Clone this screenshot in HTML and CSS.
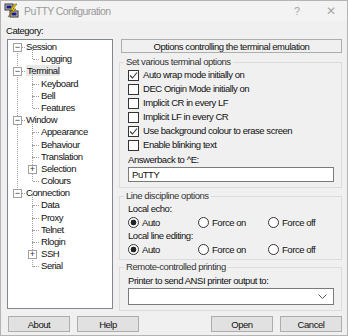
FILE: index.html
```html
<!DOCTYPE html>
<html lang="en">
<head>
  <meta charset="UTF-8">
  <title>PuTTY Configuration</title>
  <link rel="stylesheet" href="styles.css">
</head>
<body>
  <div class="window">
    <div class="titlebar">
      <svg class="app-icon" width="16" height="16" viewBox="0 0 16 16">
        <rect x="1" y="1" width="8" height="6" fill="#c8c8c8" stroke="#333" stroke-width="1"/>
        <rect x="2.5" y="2.5" width="5" height="3" fill="#1a1a80"/>
        <rect x="6" y="8" width="8" height="6" fill="#c8c8c8" stroke="#333" stroke-width="1"/>
        <rect x="7.5" y="9.5" width="5" height="3" fill="#1a1a80"/>
        <path d="M11 1 L6 7 L9 7 L4 14 L12 6 L9 6 L13 1 Z" fill="#f4d000" stroke="#6a5a00" stroke-width="0.6"/>
      </svg>
      <span class="title">PuTTY Configuration</span>
      <span class="tb-btn help-btn">?</span>
      <span class="tb-btn close-btn">✕</span>
    </div>

    <div class="content">
      <div class="cat-label">Category:</div>
      <div class="columns">
        <ul class="tree">
          <li class="top"><span class="exp">−</span>Session</li>
          <li class="child last">Logging</li>
          <li class="top"><span class="exp">−</span><span class="sel">Terminal</span></li>
          <li class="child">Keyboard</li>
          <li class="child">Bell</li>
          <li class="child last">Features</li>
          <li class="top"><span class="exp">−</span>Window</li>
          <li class="child">Appearance</li>
          <li class="child">Behaviour</li>
          <li class="child">Translation</li>
          <li class="child plus"><span class="exp">+</span>Selection</li>
          <li class="child last">Colours</li>
          <li class="top"><span class="exp">−</span>Connection</li>
          <li class="child">Data</li>
          <li class="child">Proxy</li>
          <li class="child">Telnet</li>
          <li class="child">Rlogin</li>
          <li class="child plus"><span class="exp">+</span>SSH</li>
          <li class="child last">Serial</li>
        </ul>

        <div class="panel">
          <div class="panel-head">Options controlling the terminal emulation</div>

          <fieldset class="group g1">
            <legend>Set various terminal options</legend>
            <div class="check on">Auto wrap mode initially on</div>
            <div class="check">DEC Origin Mode initially on</div>
            <div class="check">Implicit CR in every LF</div>
            <div class="check">Implicit LF in every CR</div>
            <div class="check on">Use background colour to erase screen</div>
            <div class="check">Enable blinking text</div>
            <div class="field-label">Answerback to ^E:</div>
            <div class="textbox">PuTTY</div>
          </fieldset>

          <fieldset class="group g2">
            <legend>Line discipline options</legend>
            <div class="field-label">Local echo:</div>
            <div class="radios">
              <span class="radio on">Auto</span>
              <span class="radio">Force on</span>
              <span class="radio">Force off</span>
            </div>
            <div class="field-label">Local line editing:</div>
            <div class="radios">
              <span class="radio on">Auto</span>
              <span class="radio">Force on</span>
              <span class="radio">Force off</span>
            </div>
          </fieldset>

          <fieldset class="group g3">
            <legend>Remote-controlled printing</legend>
            <div class="field-label">Printer to send ANSI printer output to:</div>
            <div class="combo">
              <svg width="9" height="6" viewBox="0 0 9 6"><path d="M0.5 0.5 L4.5 4.5 L8.5 0.5" fill="none" stroke="#555" stroke-width="1"/></svg>
            </div>
          </fieldset>
        </div>
      </div>

      <div class="buttons">
        <button class="btn">About</button>
        <button class="btn">Help</button>
        <span class="spacer"></span>
        <button class="btn">Open</button>
        <button class="btn">Cancel</button>
      </div>
    </div>
  </div>
</body>
</html>
```

FILE: styles.css
```css
body {
  margin: 0;
  padding: 0;
  font-family: "Liberation Sans", Arial, sans-serif;
  font-size: 9.5px;
  letter-spacing: -0.45px;
  color: #111;
  background-color: #f0f0f0;
}
.window {
  width: 348px;
  height: 336px;
  box-sizing: border-box;
  background-color: #f0f0f0;
  border: 1px solid #b4b4b4;
  overflow: hidden;
}
.titlebar {
  height: 20px;
  display: flex;
  align-items: center;
  background-color: #f3f3f3;
}
.app-icon {
  margin-left: 3px;
  margin-right: 4px;
}
.title {
  flex: 1;
  font-size: 10.5px;
  letter-spacing: -0.6px;
  color: #9a9a9a;
}
.tb-btn {
  color: #a8a8a8;
  font-size: 11px;
  letter-spacing: 0;
  text-align: center;
}
.help-btn {
  width: 20px;
  margin-right: 14px;
}
.close-btn {
  width: 20px;
  margin-right: 6px;
  font-size: 12px;
}
.content {
  padding: 3px 5px 0 5px;
}
.cat-label {
  height: 14px;
  line-height: 14px;
}
.columns {
  display: flex;
  margin-top: 1px;
}

/* category tree */
.tree {
  list-style: none;
  margin: 0 0 0 1px;
  padding: 1px 0 0 0;
  width: 107px;
  height: 270px;
  box-sizing: border-box;
  background-color: #fff;
  border: 1px solid #828790;
  position: relative;
}
.tree::before {
  content: "";
  position: absolute;
  left: 9px;
  top: 7px;
  height: 147px;
  border-left: 1px dotted #a0a0a0;
}
.tree li {
  height: 12.2px;
  line-height: 12.2px;
  white-space: nowrap;
  position: relative;
}
.tree .top {
  padding-left: 18px;
}
.tree .child {
  padding-left: 33px;
}
.tree .child::before {
  content: "";
  position: absolute;
  left: 24px;
  top: -6px;
  height: 12.2px;
  border-left: 1px dotted #a0a0a0;
}
.tree .child:not(.last)::before {
  height: 12.2px;
}
.tree .child::after {
  content: "";
  position: absolute;
  left: 25px;
  top: 6px;
  width: 6px;
  border-top: 1px dotted #a0a0a0;
}
.tree .child.plus::after {
  display: none;
}
.tree .exp {
  position: absolute;
  left: 5px;
  top: 2px;
  width: 7px;
  height: 7px;
  line-height: 6px;
  border: 1px solid #a0a0a0;
  background-color: #fff;
  color: #333;
  font-size: 9px;
  letter-spacing: 0;
  text-align: center;
  z-index: 1;
}
.tree .top::after {
  content: "";
  position: absolute;
  left: 14px;
  top: 6px;
  width: 3px;
  border-top: 1px dotted #a0a0a0;
}
.tree .plus .exp {
  left: 20px;
}
.tree .sel {
  background-color: #e8e8e8;
  padding: 0 1px;
}

/* options panel */
.panel {
  margin-left: 6px;
  width: 223px;
}
.panel-head {
  margin-left: 2px;
  width: 221px;
  height: 14px;
  line-height: 13px;
  box-sizing: border-box;
  border: 1px solid #adadad;
  text-align: center;
}
.group {
  margin: 0;
  padding: 0 0 4px 8px;
  border: 1px solid #dcdcdc;
  min-width: 0;
}
.group legend {
  padding: 0 2px;
  margin-left: -4px;
  color: #333;
  line-height: 12px;
}
.g1 {
  margin-top: 3px;
  padding-bottom: 5px;
}
.g2 {
  margin-top: 2px;
  padding-bottom: 3px;
}
.g3 {
  margin-top: 1px;
  padding-bottom: 5px;
}
.check {
  height: 14px;
  line-height: 14px;
  display: flex;
  align-items: center;
  gap: 4px;
}
.check::before {
  content: "";
  width: 11px;
  height: 11px;
  box-sizing: border-box;
  border: 1px solid #333;
  background-color: #fff;
}
.check.on::before {
  background-image: url("data:image/svg+xml;utf8,<svg xmlns='http://www.w3.org/2000/svg' width='9' height='9' viewBox='0 0 9 9'><path d='M1 4.5 L3.5 7 L8 1.5' fill='none' stroke='%23333' stroke-width='1.1'/></svg>");
  background-repeat: no-repeat;
  background-position: center;
}
.field-label {
  height: 13px;
  line-height: 13px;
  margin-top: 1px;
}
.g2 .field-label {
  margin-top: 0;
}
.textbox {
  width: 206px;
  height: 15px;
  line-height: 13px;
  box-sizing: border-box;
  border: 1px solid #7a7a7a;
  background-color: #fff;
  padding-left: 3px;
  margin-top: 1px;
}
.radios {
  display: flex;
  height: 14px;
  align-items: center;
}
.radio {
  display: flex;
  align-items: center;
  gap: 3px;
  width: 70px;
}
.radio::before {
  content: "";
  width: 11px;
  height: 11px;
  box-sizing: border-box;
  border: 1px solid #333;
  border-radius: 50%;
  background-color: #fff;
}
.radio.on::before {
  background-image: radial-gradient(circle, #222 0, #222 2.6px, #fff 3.2px);
}
.combo {
  width: 206px;
  height: 17px;
  box-sizing: border-box;
  border: 1px solid #7a7a7a;
  background-color: #fff;
  display: flex;
  align-items: center;
  justify-content: flex-end;
  padding-right: 6px;
  margin-top: 1px;
}

/* bottom buttons */
.buttons {
  display: flex;
  gap: 7px;
  margin-top: 5px;
  padding-left: 2px;
}
.spacer {
  flex: 1;
}
.btn {
  width: 62px;
  height: 16px;
  padding: 0;
  font-family: inherit;
  font-size: 9.5px;
  letter-spacing: -0.45px;
  color: #111;
  background-color: #e1e1e1;
  border: 1px solid #adadad;
}
```
